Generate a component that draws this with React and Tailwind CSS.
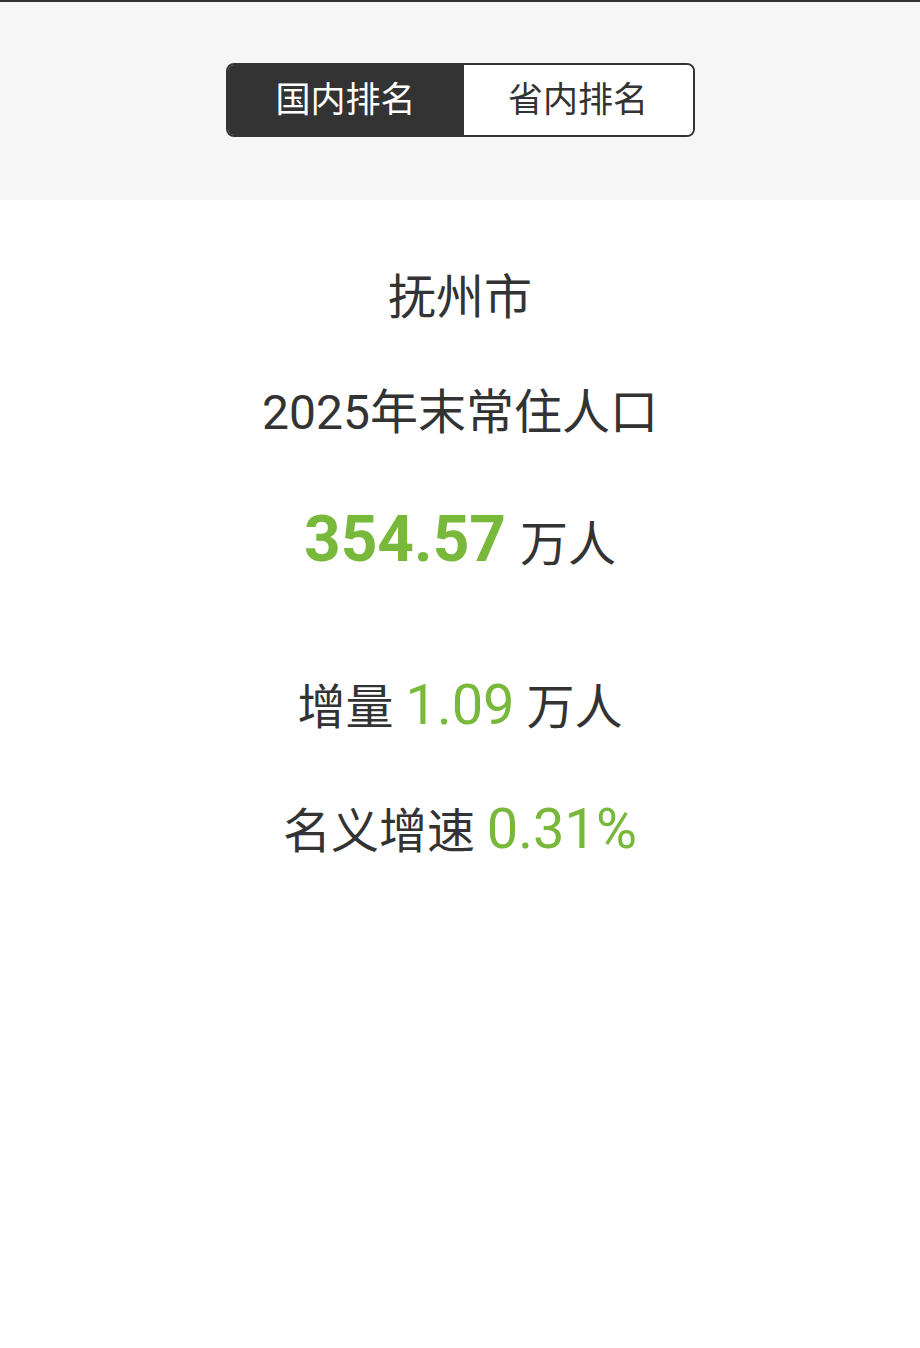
export default function App() {
  const f = { fontFamily: 'Roboto, "Noto Sans CJK SC", sans-serif' };
  return (
    <div className="w-[920px] h-[1348px] bg-white flex flex-col" style={f}>
      <div className="h-[2px] bg-[#333333]" />
      <div className="h-[198px] bg-[#f6f6f6] flex justify-center pt-[61px]">
        <div className="flex w-[469px] h-[74px] rounded-[8px] border-2 border-[#333333] overflow-hidden">
          <div className="w-[236px] bg-[#333333] text-white flex items-center justify-center text-[35px] leading-none">国内排名</div>
          <div className="flex-1 bg-white text-[#333333] flex items-center justify-center text-[35px] leading-none">省内排名</div>
        </div>
      </div>
      <div className="flex flex-col items-center text-[#333333]">
        <div className="mt-[70px] text-[48px] leading-[56px]">抚州市</div>
        <div className="mt-[59px] text-[48px] leading-[56px]">2025年末常住人口</div>
        <div className="mt-[63px] flex items-baseline gap-[14px]">
          <span className="text-[64px] font-bold text-[#78b83a] leading-[72px]">354.57</span>
          <span className="text-[48px] leading-[56px]">万人</span>
        </div>
        <div className="mt-[101px] text-[48px] leading-[56px]">增量 <span className="text-[#78b83a] text-[56px] leading-[56px]">1.09</span> 万人</div>
        <div className="mt-[65px] text-[48px] leading-[56px]">名义增速 <span className="text-[#78b83a] text-[56px] leading-[56px]">0.31%</span></div>
      </div>
    </div>
  );
}
